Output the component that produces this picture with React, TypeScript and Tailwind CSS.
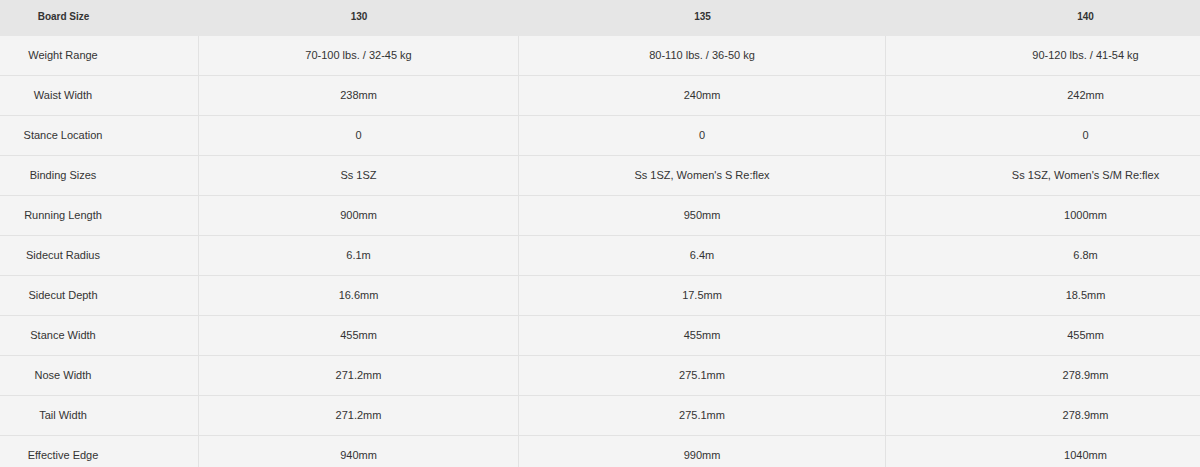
const headers = ["130", "135", "140"];

const rows: [string, string, string, string][] = [
  ["Weight Range", "70-100 lbs. / 32-45 kg", "80-110 lbs. / 36-50 kg", "90-120 lbs. / 41-54 kg"],
  ["Waist Width", "238mm", "240mm", "242mm"],
  ["Stance Location", "0", "0", "0"],
  ["Binding Sizes", "Ss 1SZ", "Ss 1SZ, Women's S Re:flex", "Ss 1SZ, Women's S/M Re:flex"],
  ["Running Length", "900mm", "950mm", "1000mm"],
  ["Sidecut Radius", "6.1m", "6.4m", "6.8m"],
  ["Sidecut Depth", "16.6mm", "17.5mm", "18.5mm"],
  ["Stance Width", "455mm", "455mm", "455mm"],
  ["Nose Width", "271.2mm", "275.1mm", "278.9mm"],
  ["Tail Width", "271.2mm", "275.1mm", "278.9mm"],
  ["Effective Edge", "940mm", "990mm", "1040mm"],
];

const cols = "grid grid-cols-[199px_320px_367px_1fr]";

export default function App() {
  return (
    <div className="w-[1200px] h-[467px] overflow-hidden bg-[#f4f4f4] text-[#333] font-['Liberation_Sans',Arial,sans-serif]">
      <div className={`${cols} h-9 bg-[#e6e6e6] text-[10px] font-bold text-[#333]`}>
        <div className="flex items-center justify-center pr-[72px] pb-1">Board Size</div>
        {headers.map((h, i) => (
          <div
            key={h}
            className={`flex items-center justify-center pb-1 ${i === 2 ? "pl-[85px]" : ""}`}
          >
            {h}
          </div>
        ))}
      </div>
      {rows.map((r) => (
        <div key={r[0]} className={`${cols} h-10 border-b border-[#e2e2e2] text-[11px]`}>
          <div className="flex items-center justify-center pr-[72px] border-r border-[#e2e2e2]">
            {r[0]}
          </div>
          <div className="flex items-center justify-center border-r border-[#e2e2e2]">{r[1]}</div>
          <div className="flex items-center justify-center border-r border-[#e2e2e2]">{r[2]}</div>
          <div className="flex items-center justify-center pl-[85px]">{r[3]}</div>
        </div>
      ))}
    </div>
  );
}
